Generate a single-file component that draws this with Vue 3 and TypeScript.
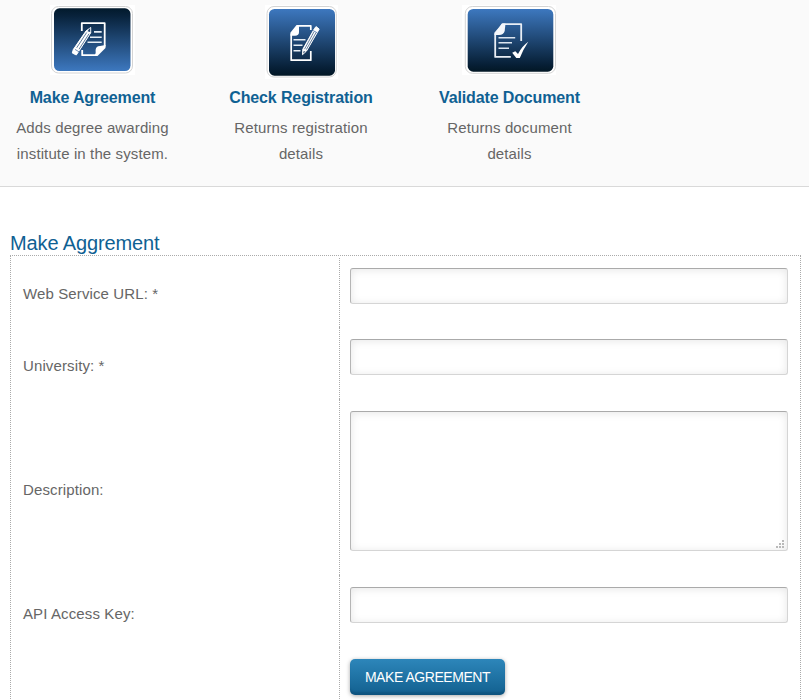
<script setup lang="ts">
import { ref } from 'vue'

const url = ref('')
const university = ref('')
const description = ref('')
const apiKey = ref('')
</script>

<template>
  <div class="page">
    <nav class="services">
      <a class="service">
        <span class="picture">
          <svg width="85" height="70" viewBox="50 5 85 70">
            <defs>
              <linearGradient id="fall" x1="0" y1="0" x2="0" y2="1">
                <stop offset="0" stop-color="#021a2c" />
                <stop offset="0.12" stop-color="#08223b" />
                <stop offset="1" stop-color="#3d78bf" />
              </linearGradient>
            </defs>
            <rect x="50" y="5" width="85" height="70" fill="#fff" />
            <rect x="51.5" y="6.5" width="81" height="66.5" rx="7" fill="#fff" stroke="#d4d4d4" />
            <rect x="54" y="8.3" width="76.5" height="62.7" rx="5.5" fill="url(#fall)" />
            <path d="M81.8 31V23.2H104.7V46L96 55.2H82.2V50" fill="none" stroke="#fff" stroke-width="1.8" stroke-linejoin="round" />
            <path d="M105.5 45V48L97.5 56H94.5Q96.3 53 95.6 50Q96 46.2 100 46Z" fill="#fff" />
            <path d="M94 31.9H101.7M90 37.2H101.7M87.5 42.3H101.7" stroke="#e6edf4" stroke-width="1.6" />
            <path d="M90.7 27.5L90.7 32.8L79.3 50.5L76.3 55L72.3 53L73.3 49.5L86 31Z" fill="#fff" stroke="#fff" stroke-linejoin="round" />
            <path d="M76.7 47.8L86.7 32.5M79 49.2L89 33.8" stroke="#284f7c" stroke-width="0.75" />
            <path d="M75 49.4L79 51.8" stroke="#4e74a4" stroke-width="0.8" />
            <path d="M87.5 31.2L90.2 27.8L90.2 32Z" fill="#21446e" />
          </svg>
        </span>
        <strong>Make Agreement</strong>
        <span class="summary">Adds degree awarding<br />institute in the system.</span>
      </a>

      <a class="service">
        <span class="picture">
          <svg width="73" height="74" viewBox="265 5 73 74">
            <defs>
              <linearGradient id="rise" x1="0" y1="0" x2="0" y2="1">
                <stop offset="0" stop-color="#3d78bf" />
                <stop offset="0.9" stop-color="#061e34" />
                <stop offset="1" stop-color="#021725" />
              </linearGradient>
            </defs>
            <rect x="265" y="5" width="73" height="74" fill="#fff" />
            <rect x="267" y="6.5" width="69.3" height="70.5" rx="7" fill="#fff" stroke="#d4d4d4" />
            <rect x="269" y="9" width="66" height="66.7" rx="5.5" fill="url(#rise)" />
            <path d="M310.8 30V25.8H297L291.2 33V60.2H310.8V51" fill="none" stroke="#fff" stroke-width="1.7" stroke-linejoin="round" />
            <path d="M290.5 34.5L297 25.2H299V32Q299 35.8 295 35.8H290.5Z" fill="#fff" />
            <path d="M293.5 39.7H305.5M293.5 45.2H302.5M293.5 50.7H300.5" stroke="#e6edf4" stroke-width="1.5" />
            <path d="M302.5 54.7L302.8 49.3L314.5 28.5L316 26.6L319.2 29L317.5 32L306.5 51Z" fill="#fff" stroke="#fff" stroke-linejoin="round" />
            <path d="M304.5 49.2L314 31.8M306.3 49.6L316 32.7" stroke="#244976" stroke-width="0.7" />
            <path d="M313.2 30.6L317.2 32.8" stroke="#456fa6" stroke-width="0.8" />
            <path d="M303.6 51.2L305.3 51.6L303.3 53.6Z" fill="#17365c" />
          </svg>
        </span>
        <strong>Check Registration</strong>
        <span class="summary">Returns registration<br />details</span>
      </a>

      <a class="service">
        <span class="picture wide">
          <svg width="94" height="70" viewBox="462 5 94 70">
            <rect x="462" y="5" width="94" height="70" fill="#fff" />
            <rect x="465.3" y="6.5" width="90.2" height="66.8" rx="7" fill="#fff" stroke="#d4d4d4" />
            <rect x="467.7" y="9" width="85.6" height="62.7" rx="5.5" fill="url(#rise)" />
            <path d="M521.2 41V24.2H503L495.2 33V56.9H510.8" fill="none" stroke="#e9eef5" stroke-width="1.8" stroke-linejoin="round" />
            <path d="M494.5 34L501.8 23.5H505.5L504.7 31Q503.5 34.9 499 34.9H494.5Z" fill="#f4f7fb" />
            <path d="M498.5 37.7H515.2M498.5 42.7H512M498.5 48.2H509" stroke="#dce5ef" stroke-width="1.6" />
            <path d="M512.2 52.8L515.3 51.2L518 54Q521.5 46.5 528.3 41.7Q522.5 50.5 519.8 58H516.3Z" fill="#fff" />
          </svg>
        </span>
        <strong>Validate Document</strong>
        <span class="summary">Returns document<br />details</span>
      </a>
    </nav>

    <main>
      <h2>Make Aggrement</h2>
      <form @submit.prevent>
        <div class="row first">
          <label for="url">Web Service URL: *</label>
          <div class="cell"><input id="url" v-model="url" type="text" /></div>
        </div>
        <div class="row">
          <label for="university">University: *</label>
          <div class="cell"><input id="university" v-model="university" type="text" /></div>
        </div>
        <div class="row">
          <label for="description">Description:</label>
          <div class="cell area">
            <textarea id="description" v-model="description"></textarea>
            <svg class="grip" width="8" height="8" viewBox="0 0 8 8">
              <path d="M6 0h2v2h-2zM3 3h2v2h-2zM6 3h2v2h-2zM0 6h2v2h-2zM3 6h2v2h-2zM6 6h2v2h-2z" />
            </svg>
          </div>
        </div>
        <div class="row">
          <label for="key">API Access Key:</label>
          <div class="cell"><input id="key" v-model="apiKey" type="text" /></div>
        </div>
        <div class="row">
          <span class="blank"></span>
          <div class="cell"><button type="submit">MAKE AGREEMENT</button></div>
        </div>
      </form>
    </main>
  </div>
</template>

<style>
body {
  background: #fff;
}
</style>

<style scoped>
.page {
  height: 700px;
  overflow: hidden;
  font: 15px/26px "Liberation Sans", Arial, sans-serif;
  letter-spacing: 0.12px;
  color: #666;
}
.services {
  box-sizing: border-box;
  height: 187px;
  padding-top: 5px;
  display: grid;
  grid-template-columns: 185px 232px 185px;
  background: #fafafa;
  border-bottom: 1px solid #d9d9d9;
}
.service {
  display: flex;
  flex-direction: column;
  align-items: center;
  text-align: center;
}
.picture {
  height: 80px;
}
.picture svg {
  display: block;
}
.wide {
  margin-right: 1px;
}
.service strong {
  font-size: 16px;
  letter-spacing: -0.13px;
  color: #0f6193;
}
.summary {
  margin-top: 4px;
}
main {
  padding: 44px 8px 0 10px;
}
h2 {
  margin: 0;
  font-size: 20px;
  line-height: 24px;
  font-weight: 400;
  letter-spacing: -0.12px;
  color: #0f6193;
}
form {
  padding-top: 2px;
  border: 1px dotted #aaa;
  border-bottom: 0;
}
.row {
  display: grid;
  grid-template-columns: 328px 1fr;
  align-items: stretch;
}
.row:last-child .cell {
  padding-bottom: 36px;
}
label {
  display: flex;
  align-items: center;
  padding: 6px 0 0 12px;
}
.cell {
  padding: 12px 12px 24px 10px;
  border-left: 1px dotted #aaa;
}
.first .cell {
  padding-top: 10px;
  padding-bottom: 23px;
}
.first label {
  padding-top: 2px;
}
input,
textarea {
  box-sizing: border-box;
  display: block;
  width: 100%;
  height: 36px;
  margin: 0;
  padding: 6px 9px;
  border: 1px solid #d5d5d5;
  border-top-color: #aaa;
  border-left-color: #b5b5b5;
  border-radius: 3px;
  background: #fff;
  box-shadow: inset 0 1px 8px rgba(0, 0, 0, 0.1);
  font: inherit;
  color: inherit;
  outline: none;
}
textarea {
  height: 140px;
  resize: none;
}
.area {
  position: relative;
}
.grip {
  position: absolute;
  right: 16px;
  bottom: 27px;
  fill: #b9b9b9;
}
button {
  display: block;
  width: 155px;
  height: 36px;
  padding: 0;
  border: 0;
  border-radius: 5px;
  background: linear-gradient(#2d86ba, #12608f);
  box-shadow: inset 0 -4px 2px -1px rgba(0, 45, 75, 0.25), 0 1px 4px rgba(0, 0, 0, 0.35);
  font: 14px/36px "Liberation Sans", Arial, sans-serif;
  letter-spacing: -0.45px;
  color: #fff;
}
</style>
